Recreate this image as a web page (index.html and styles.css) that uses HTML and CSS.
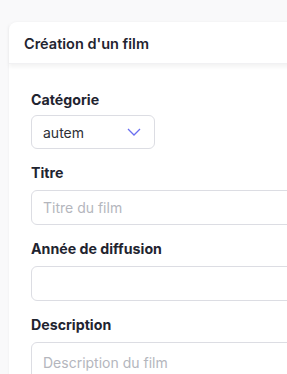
FILE: index.html
```html
<!DOCTYPE html>
<html lang="fr">
<head>
    <meta charset="UTF-8">
    <meta name="viewport" content="width=device-width, initial-scale=1.0">
    <title>Création d'un film</title>
    <link rel="stylesheet" href="styles.css">
</head>
<body>
    <div class="card">
        <div class="card-header">Création d'un film</div>
        <form class="card-body">
            <div class="field">
                <label for="category" class="label-select">Catégorie</label>
                <div class="select" id="category">
                    <span>autem</span>
                    <svg width="14" height="8" viewBox="0 0 14 8">
                        <polyline points="1,1 7,7 13,1" fill="none" stroke="#6a6ff0" stroke-width="1.3"/>
                    </svg>
                </div>
            </div>
            <div class="field">
                <label for="title">Titre</label>
                <input id="title" class="input" type="text" placeholder="Titre du film">
            </div>
            <div class="field">
                <label for="year">Année de diffusion</label>
                <input id="year" class="input" type="text">
            </div>
            <div class="field">
                <label for="description">Description</label>
                <textarea id="description" class="input textarea" placeholder="Description du film"></textarea>
            </div>
        </form>
    </div>
</body>
</html>
```

FILE: styles.css
```css
html {
    overflow: hidden;
}

body {
    font-family: 'Inter', sans-serif;
    margin: 0;
    padding: 22px 0 0 9px;
    background: #f9f9fa;
    color: #1f2430;
}

.card {
    width: 330px;
    background-color: #fff;
    border-radius: 8px;
    box-shadow: 0 0 3px rgba(0, 0, 0, 0.05);
}

.card-header {
    height: 42px;
    box-sizing: border-box;
    padding: 13px 15px 0;
    font-size: 14.5px;
    font-weight: 600;
    border-bottom: 1px solid #f1f1f3;
    box-shadow: 0 3px 4px rgba(0, 0, 0, 0.05);
}

.card-body {
    display: flex;
    flex-direction: column;
    gap: 14px;
    padding: 26px 22px 20px;
}

.field {
    display: flex;
    flex-direction: column;
    align-items: flex-start;
}

label {
    font-size: 14.2px;
    font-weight: 700;
    line-height: 20px;
    margin-bottom: 7px;
    color: #1f2430;
}

.label-select {
    margin-bottom: 5px;
}

.select {
    width: 124px;
    height: 34px;
    box-sizing: border-box;
    border: 1px solid #dcdde3;
    border-radius: 6px;
    padding: 0 13px 0 11px;
    display: flex;
    align-items: center;
    justify-content: space-between;
    font-size: 14px;
    color: #2d2f36;
}

.input {
    width: 100%;
    height: 35px;
    box-sizing: border-box;
    border: 1px solid #dcdde3;
    border-radius: 6px;
    padding: 0 11px;
    font-family: 'Inter', sans-serif;
    font-size: 14px;
    color: #2d2f36;
    background: #fff;
}

.input::placeholder {
    color: #b4b6bd;
}

.textarea {
    height: 60px;
    padding-top: 11px;
    resize: none;
}
```
